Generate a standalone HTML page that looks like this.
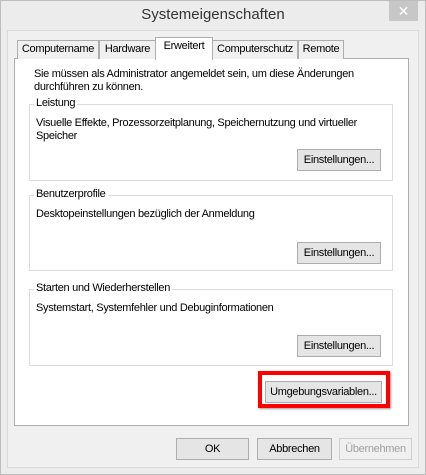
<!DOCTYPE html><html><head><style>
*{margin:0;padding:0;box-sizing:border-box}
body{width:426px;height:475px;background:#e9e9e9;font-family:"Liberation Sans",sans-serif;font-size:11px;color:#000;position:relative;overflow:hidden}
.a{position:absolute}
.t{letter-spacing:-0.3px}
.win{left:0;top:0;width:426px;height:475px;border:1px solid #bdbdbd;background:#ececec}
.client{left:7px;top:30px;width:412px;height:438px;background:#f0f0f0;border:1px solid #d9d9d9}
.title{left:0;top:6px;width:426px;text-align:center;font-size:15px;color:#333}
.close{left:389px;top:1px;width:29px;height:20px;background:#c7c7c7;color:#fff;text-align:center;font-size:14px;line-height:20px}
.tab{top:40px;height:19px;border:1px solid #adadad;border-bottom:none;background:#f0f0f0;text-align:center;line-height:17px;letter-spacing:-0.3px}
.panel{left:14px;top:58px;width:395px;height:368px;background:#fff;border:1px solid #adadad}
.grp{border:1px solid #dcdcdc;left:29px;width:364px}
.lbl{background:#fff;padding:0 2px;letter-spacing:-0.3px}
.btn{border:1px solid #adadad;background:#e5e5e5;text-align:center;line-height:20px;height:22px;letter-spacing:-0.3px}
</style></head><body>
<div class="a win"></div>
<div class="a title">Systemeigenschaften</div>
<div class="a close">✕</div>
<div class="a client"></div>
<div class="a panel"></div>
<div class="a tab" style="left:17px;width:82px">Computername</div>
<div class="a tab" style="left:99px;width:57px">Hardware</div>
<div class="a tab" style="left:212px;width:86px">Computerschutz</div>
<div class="a tab" style="left:298px;width:46px">Remote</div>
<div class="a tab" style="left:155px;top:37px;height:23px;width:58px;background:#fff">Erweitert</div>
<div class="a t" style="left:34px;top:68px;line-height:13px">Sie müssen als Administrator angemeldet sein, um diese Änderungen<br>durchführen zu können.</div>
<div class="a grp" style="top:104px;height:77px"></div>
<div class="a lbl" style="left:34px;top:97px">Leistung</div>
<div class="a t" style="left:36px;top:117px;line-height:13px">Visuelle Effekte, Prozessorzeitplanung, Speichernutzung und virtueller<br>Speicher</div>
<div class="a btn" style="left:297px;top:149px;width:84px">Einstellungen...</div>
<div class="a grp" style="top:195px;height:76px"></div>
<div class="a lbl" style="left:34px;top:188px">Benutzerprofile</div>
<div class="a t" style="left:36px;top:208px">Desktopeinstellungen bezüglich der Anmeldung</div>
<div class="a btn" style="left:297px;top:242px;width:84px">Einstellungen...</div>
<div class="a grp" style="top:289px;height:77px"></div>
<div class="a lbl" style="left:34px;top:282px">Starten und Wiederherstellen</div>
<div class="a t" style="left:36px;top:302px">Systemstart, Systemfehler und Debuginformationen</div>
<div class="a btn" style="left:297px;top:335px;width:84px">Einstellungen...</div>
<div class="a" style="left:258px;top:371px;width:132px;height:37px;border:4px solid #f00;box-shadow:1px 1px 2px #999"></div>
<div class="a btn" style="left:265px;top:381px;width:117px">Umgebungsvariablen...</div>
<div class="a btn" style="left:176px;top:438px;width:73px">OK</div>
<div class="a btn" style="left:257px;top:438px;width:75px">Abbrechen</div>
<div class="a btn" style="left:339px;top:438px;width:73px;color:#a0a0a0;border-color:#cfcfcf;background:#f0f0f0">Übernehmen</div>
</body></html>
